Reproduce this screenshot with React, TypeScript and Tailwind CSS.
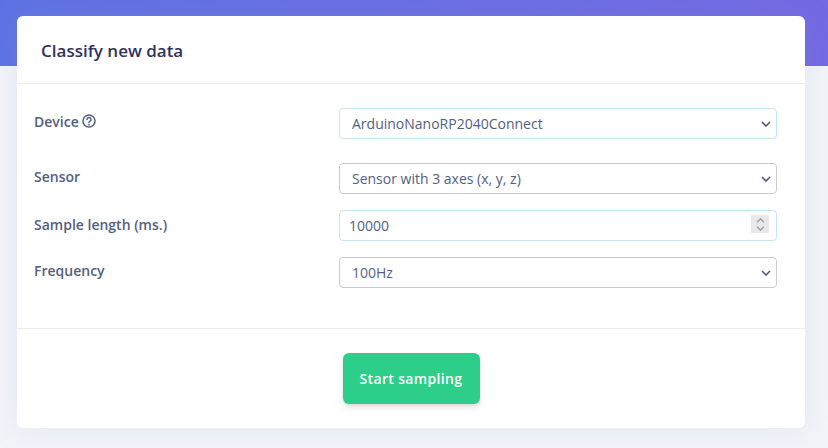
const fieldClass =
  'w-full h-[31px] appearance-none rounded-[4px] border bg-white text-[14px] font-normal text-[#525f7f] outline-none';

function Chevron({ up, className }: { up?: boolean; className: string }) {
  return (
    <svg viewBox="0 0 10 6" className={className} fill="none" stroke="currentColor" strokeWidth="1.6">
      <path d={up ? 'M1 5l4-4 4 4' : 'M1 1l4 4 4-4'} />
    </svg>
  );
}

function SelectField({ value, focused }: { value: string; focused?: boolean }) {
  return (
    <div className="relative w-[438px]">
      <select
        defaultValue={value}
        className={`${fieldClass} pl-[12px] pr-8 ${focused ? 'border-[#c6e4f3]' : 'border-[#cacbce]'}`}
      >
        <option>{value}</option>
      </select>
      <Chevron className="absolute right-[6px] top-[13px] w-[10px] h-[6px] text-[#4d5a7c] pointer-events-none" />
    </div>
  );
}

function NumberField({ value }: { value: string }) {
  return (
    <div className="relative w-[438px]">
      <input readOnly value={value} className={`${fieldClass} px-[9px] border-[#c6e4f3]`} />
      <div className="absolute right-[8px] top-[5px] w-[18px] h-[18px] bg-[#e7e7ec] flex flex-col items-center justify-center gap-[3px] text-[#9b9ba8]">
        <Chevron up className="w-[9px] h-[5px]" />
        <Chevron className="w-[9px] h-[5px]" />
      </div>
    </div>
  );
}

function HelpIcon() {
  return (
    <svg viewBox="0 0 16 16" className="w-[14px] h-[14px] ml-[3px]" fill="none" stroke="currentColor">
      <circle cx="8" cy="8" r="6.9" strokeWidth="1.7" />
      <path d="M5.7 6.3a2.3 2.3 0 1 1 3.5 1.9c-.8.5-1.2.9-1.2 1.5" strokeWidth="1.7" strokeLinecap="round" />
      <circle cx="8" cy="12" r="1" fill="currentColor" stroke="none" />
    </svg>
  );
}

function App() {
  return (
    <div
      className="h-[448px] overflow-hidden bg-[#f3f4fa]"
      style={{ fontFamily: '"Open Sans", sans-serif' }}
    >
      <div className="h-[66px] bg-gradient-to-r from-[#5e72e4] to-[#7369e3]" />
      <div className="ml-[17px] w-[788px] mt-[-50px] h-[412px] rounded-[6px] bg-white flex flex-col shadow-[0_0_32px_rgba(136,152,170,0.15)]">
        <div className="h-[68px] border-b border-[#ebedf0] pl-[24px] pt-[22px]">
          <h1 className="text-[17px] leading-[25px] font-semibold text-[#32325d]">Classify new data</h1>
        </div>

        <div className="h-[245px] border-b border-[#ebedf0] pt-[24px] text-[14px] font-semibold text-[#525f7f]">
          <div className="flex items-start pl-[17px] mb-[24px]">
            <label className="w-[305px] flex items-center h-[26px]">
              Device
              <HelpIcon />
            </label>
            <SelectField value="ArduinoNanoRP2040Connect" focused />
          </div>
          <div className="flex items-start pl-[17px] mb-[16px]">
            <label className="w-[305px] flex items-center h-[26px]">Sensor</label>
            <SelectField value="Sensor with 3 axes (x, y, z)" />
          </div>
          <div className="flex items-start pl-[17px] mb-[16px]">
            <label className="w-[305px] flex items-center h-[28px]">Sample length (ms.)</label>
            <NumberField value="10000" />
          </div>
          <div className="flex items-start pl-[17px]">
            <label className="w-[305px] flex items-center h-[26px]">Frequency</label>
            <SelectField value="100Hz" />
          </div>
        </div>

        <div className="flex-1 flex justify-center pt-[24px]">
          <button className="w-[137px] h-[51px] rounded-[6px] bg-[#2dce89] text-white text-[14px] font-semibold tracking-[0.35px] shadow-[0_4px_6px_rgba(50,50,93,0.11),0_1px_3px_rgba(0,0,0,0.08)]">
            Start sampling
          </button>
        </div>
      </div>
    </div>
  );
}

export default App;
